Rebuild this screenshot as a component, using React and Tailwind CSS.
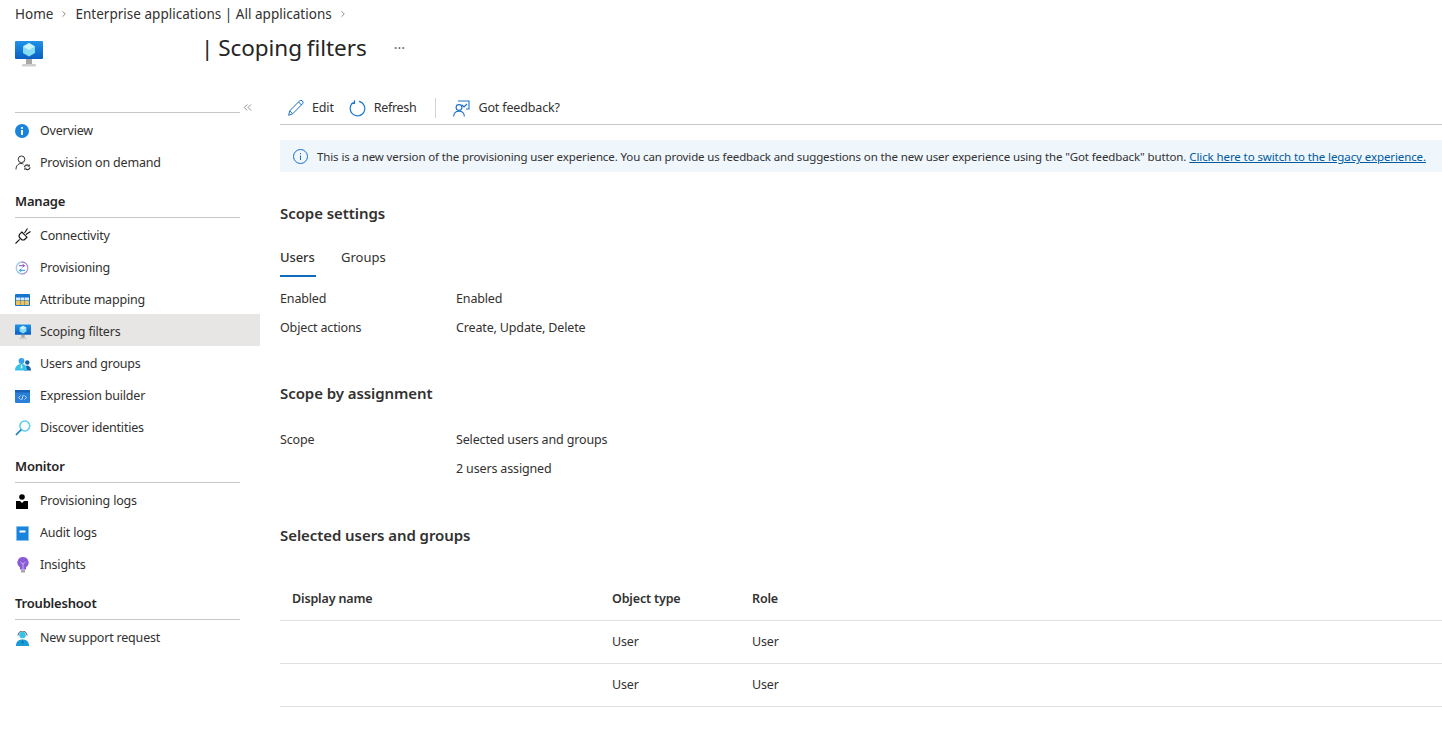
import { ChevronRight, ChevronsLeft } from 'lucide-react';

const font = { fontFamily: '"Noto Sans", sans-serif' };

function MonitorIcon({ id = 'scr', size = 16 }) {
    return (
        <svg width={size} height={size} viewBox="0 0 28 28">
            <defs>
                <linearGradient id={id} x1="0" y1="0" x2="0" y2="1">
                    <stop offset="0" stopColor="#1f93e8" />
                    <stop offset="1" stopColor="#0a5fc2" />
                </linearGradient>
            </defs>
            <rect x="0" y="1" width="28" height="18" rx="1" fill={`url(#${id})`} />
            <path d="M14 3l6 3.500v6.500l-6 3.500-6-3.500V6.500z" fill="#86dcf2" />
            <path d="M14 3l6 3.500-6 3.500-6-3.500z" fill="#c9f3fb" />
            <rect x="11" y="19" width="6" height="5" fill="#a8a8a8" />
            <rect x="7" y="24" width="14" height="2.500" rx="1" fill="#cfcfcf" />
        </svg>
    );
}

function OverviewIcon() {
    return (
        <svg width="14" height="14" viewBox="0 0 14 14">
            <circle cx="7" cy="7" r="7" fill="#1a84dc" />
            <rect x="6" y="6" width="2" height="5" fill="#fff" />
            <circle cx="7" cy="4" r="1.100" fill="#fff" />
        </svg>
    );
}

function ProvisionDemandIcon() {
    return (
        <svg width="16" height="16" viewBox="0 0 16 16" fill="none" stroke="#333" strokeWidth="1">
            <circle cx="6.500" cy="4.300" r="3.300" />
            <path d="M1 14.500c0-3.500 2-6 5-6 1 0 1.800.2 2.500.700" />
            <path d="M9.500 12.200a2.500 2.500 0 0 1 4.300-1.500M15 12.300a2.500 2.500 0 0 1-4.400 1.500" strokeWidth="1.200" />
            <path d="M14.500 9.500v1.800h-1.800M9.700 15v-1.800h1.800" strokeWidth="0.800" />
        </svg>
    );
}

function ConnectivityIcon() {
    return (
        <svg width="16" height="16" viewBox="0 0 16 16" fill="none" stroke="#111" strokeWidth="1.100">
            <path d="M6.800 4l5.200 5.200-1.800 1.800a3 3 0 0 1-4.200 0L5 10a3 3 0 0 1 0-4.200z" />
            <path d="M0.500 15.500l4.200-4.200M9.500 5l3-4.500M11 6.500l4.500-3" />
        </svg>
    );
}

function ProvisioningIcon() {
    return (
        <svg width="14" height="14" viewBox="0 0 14 14" fill="none" strokeWidth="1.400">
            <path d="M2.200 10A6 6 0 0 1 7 1" stroke="#a9c9e8" />
            <path d="M7 1a6 6 0 0 1 5.800 5.500" stroke="#a27fd0" />
            <path d="M12.800 6.500A6 6 0 0 1 7 13" stroke="#b49ad8" />
            <path d="M7 13a6 6 0 0 1-4.800-3" stroke="#8ec0e4" />
            <path d="M4 4.700h5.500M7.500 3.200l2 1.500-2 1.500" stroke="#7a55c0" strokeWidth="1" />
            <path d="M10 9.300H4.500M6.500 7.800l-2 1.500 2 1.500" stroke="#1d9ad6" strokeWidth="1" />
        </svg>
    );
}

function AttributeIcon() {
    return (
        <svg width="15" height="12" viewBox="0 0 15 12">
            <rect width="15" height="12" rx="1" fill="#1675d1" />
            <rect x="1" y="3.500" width="4" height="2.500" fill="#d7ecfb" />
            <rect x="5.500" y="3.500" width="4" height="2.500" fill="#d7ecfb" />
            <rect x="10" y="3.500" width="4" height="2.500" fill="#d7ecfb" />
            <rect x="1" y="6.500" width="4" height="4.500" fill="#f0c35a" />
            <rect x="5.500" y="6.500" width="4" height="4.500" fill="#f0c35a" />
            <rect x="10" y="6.500" width="4" height="4.500" fill="#f0c35a" />
        </svg>
    );
}

function UsersIcon() {
    return (
        <svg width="16" height="13" viewBox="0 0 16 13">
            <circle cx="12.300" cy="4.500" r="2.200" fill="#1b5fa8" />
            <path d="M9 12.500c0-2.800 1.200-5 3.300-5s3.700 2.200 3.700 5z" fill="#1b5fa8" />
            <circle cx="6.500" cy="3" r="2.900" fill="#35a3ea" />
            <path d="M0 12.500c0-4 2.500-6.500 6.500-6.500s5.500 2.500 5.500 6.500z" fill="#35c4e8" />
            <path d="M6.500 6l-1 3 1 2 1-2z" fill="#e8f7fc" />
        </svg>
    );
}

function ExpressionIcon() {
    return (
        <svg width="15" height="13" viewBox="0 0 15 13" fill="none">
            <rect width="15" height="13" rx="1" fill="#2a7fd8" />
            <rect width="15" height="2.500" fill="#1a62b3" />
            <path d="M5.500 5.500L3.500 7.500l2 2M9.500 5.500l2 2-2 2M8.300 5L6.700 10" stroke="#e8f4ff" strokeWidth="0.800" />
        </svg>
    );
}

function SearchIcon() {
    return (
        <svg width="16" height="16" viewBox="0 0 16 16" fill="none">
            <circle cx="9.800" cy="6" r="4.900" stroke="#55cdf0" strokeWidth="1.500" />
            <path d="M6.300 9.500L1 15" stroke="#1780c4" strokeWidth="1.800" />
        </svg>
    );
}

function LogsIcon() {
    return (
        <svg width="12" height="15" viewBox="0 0 12 15" className="ml-[1px]">
            <circle cx="6" cy="3" r="2.800" fill="#000" />
            <path d="M0 7h4l2 2 2-2h4v8H0z" fill="#000" />
        </svg>
    );
}

function AuditIcon() {
    return (
        <svg width="13" height="15" viewBox="0 0 13 15" className="ml-[1px]">
            <rect width="13" height="15" rx="1" fill="#7fc0ee" />
            <rect x="1" y="1" width="11" height="13" fill="#1a84dc" />
            <rect x="3.500" y="4.500" width="6" height="2" fill="#fff" />
        </svg>
    );
}

function InsightsIcon() {
    return (
        <svg width="12" height="16" viewBox="0 0 12 16" className="ml-[2px]">
            <path d="M6 0a5.700 5.700 0 0 1 3 10.500V12.500H3v-2A5.700 5.700 0 0 1 6 0z" fill="#8a5bd6" />
            <path d="M3.500 5l2.500 2 2.500-2M6 7v5" stroke="#d9c6f5" strokeWidth="0.800" fill="none" />
            <rect x="4" y="13" width="4" height="2.500" fill="#a8a8a8" />
        </svg>
    );
}

function SupportIcon() {
    return (
        <svg width="13" height="15" viewBox="0 0 13 15" className="ml-[1px]">
            <circle cx="6.500" cy="4" r="3.300" fill="#35c4e8" />
            <path d="M2 4.500a4.500 4.500 0 0 1 9 0" stroke="#444" strokeWidth="0.900" fill="none" />
            <path d="M0 15c0-4 2-6.500 6.500-6.500S13 11 13 15z" fill="#1a9bd8" />
            <path d="M6.500 8.500l-1 3 1 1.500 1-1.500z" fill="#0d6ea8" />
        </svg>
    );
}

function Section({ title, children }) {
    return (
        <div>
            <div className="h-10 pt-[15px] text-[13px] leading-[18px] font-semibold tracking-[-0.2px] text-[#252525]">
                <div className="pl-[15px]">{title}</div>
            </div>
            <div className="ml-[15px] mr-5 border-t border-[#c8c6c4]" />
            {children}
        </div>
    );
}

function NavItem({ icon, label, active }) {
    return (
        <div className={`h-8 flex items-center pl-[15px] pt-[4px] text-[12.5px] tracking-[-0.2px] text-[#323130] ${active ? 'bg-[#e8e6e4]' : ''}`}>
            <span className="w-[25px] flex items-center">{icon}</span>
            {label}
        </div>
    );
}

function Heading({ children }) {
    return <h2 className="text-[15px] leading-5 font-semibold text-[#323130] tracking-[-0.07px]">{children}</h2>;
}

function InfoRow({ label, value }) {
    return (
        <div className="h-[29px] flex items-center text-[12.5px] tracking-[-0.15px] text-[#323130]">
            <span className="w-[176px]">{label}</span>
            <span>{value}</span>
        </div>
    );
}

export default function App() {
    return (
        <div className="h-[749px] w-[1442px] overflow-hidden bg-white" style={font}>
            <div className="h-[28px] pl-[15px] flex items-center text-[13.5px] text-[#323130]">
                <span>Home</span>
                <ChevronRight size={10} className="mx-[6px] text-[#777]" />
                <span className="tracking-[0.02px]">Enterprise applications | All applications</span>
                <ChevronRight size={10} className="ml-[6px] text-[#777]" />
            </div>

            <div className="h-[64px] pl-[15px] flex items-start">
                <span className="mt-[12px]"><MonitorIcon id="scr-title" size={28} /></span>
                <h1 className="ml-[158px] mt-[2px] text-[22.5px] leading-9 tracking-[-0.05px] [word-spacing:-1px] text-[#252525]">| Scoping filters</h1>
                <span className="ml-[27px] mt-[9px] text-[14px] text-[#666]">···</span>
            </div>

            <div className="flex">
                <aside className="w-[260px] shrink-0">
                    <div className="h-[21px] relative">
                        <div className="absolute left-[15px] right-5 bottom-0 border-t border-[#c8c6c4]" />
                        <ChevronsLeft size={13} strokeWidth={1.5} className="absolute left-[241px] top-[9px] text-[#777]" />
                    </div>
                    <NavItem icon={<OverviewIcon />} label="Overview" />
                    <NavItem icon={<ProvisionDemandIcon />} label="Provision on demand" />
                    <Section title="Manage">
                        <NavItem icon={<ConnectivityIcon />} label="Connectivity" />
                        <NavItem icon={<ProvisioningIcon />} label="Provisioning" />
                        <NavItem icon={<AttributeIcon />} label="Attribute mapping" />
                        <NavItem icon={<MonitorIcon />} label="Scoping filters" active />
                        <NavItem icon={<UsersIcon />} label="Users and groups" />
                        <NavItem icon={<ExpressionIcon />} label="Expression builder" />
                        <NavItem icon={<SearchIcon />} label="Discover identities" />
                    </Section>
                    <Section title="Monitor">
                        <NavItem icon={<LogsIcon />} label="Provisioning logs" />
                        <NavItem icon={<AuditIcon />} label="Audit logs" />
                        <NavItem icon={<InsightsIcon />} label="Insights" />
                    </Section>
                    <Section title="Troubleshoot">
                        <NavItem icon={<SupportIcon />} label="New support request" />
                    </Section>
                </aside>

                <main className="flex-1 pl-5">
                    <div className="h-[33px] flex items-center border-b border-[#c8c6c4] text-[12.5px] tracking-[-0.15px] text-[#323130]">
                        <span className="ml-2 flex items-center">
                            <svg width="16" height="16" viewBox="0 0 16 16" fill="none" stroke="#1a6fc9" strokeWidth="1">
                                <path d="M0.700 15.300l1-4.500L11.500 1a1.800 1.800 0 0 1 3 2.800l-9.800 10zM1.700 10.800l3 3M10.500 2l3 3" />
                            </svg>
                            <span className="ml-2">Edit</span>
                        </span>
                        <span className="ml-[15px] flex items-center">
                            <svg width="17" height="17" viewBox="0 0 17 17" fill="none" stroke="#1a78d0" strokeWidth="1.200">
                                <path d="M4.700 2.300a7.300 7.300 0 1 0 5.300-.900" />
                                <path d="M5.500 0.300v3.200H2.300" />
                            </svg>
                            <span className="ml-[8px] tracking-[-0.3px]">Refresh</span>
                        </span>
                        <span className="ml-[19px] h-5 border-l border-[#d6d4d2]" />
                        <span className="ml-[17px] flex items-center">
                            <svg width="17" height="17" viewBox="0 0 17 17" fill="none" stroke="#1a6fc9" strokeWidth="1.100">
                                <circle cx="6" cy="7.500" r="2.900" />
                                <path d="M0.700 16.500c0-3 2-5.200 5.300-5.200s5.300 2.200 5.300 5.200M5 1h11v8h-3M9 5l2 2 3-3" />
                            </svg>
                            <span className="ml-2">Got feedback?</span>
                        </span>
                    </div>

                    <div className="mt-[15px] h-[32px] bg-[#eff6fc] pl-[13px] pt-[2px] flex items-center text-[11.5px] tracking-[-0.118px] text-[#323130] whitespace-nowrap">
                        <svg width="15" height="15" viewBox="0 0 15 15" fill="none" className="mr-[9px] shrink-0 -mt-[2px]">
                            <circle cx="7.500" cy="7.500" r="7" stroke="#1a6fc9" />
                            <rect x="7" y="6.500" width="1" height="4.500" fill="#1a6fc9" />
                            <rect x="7" y="4" width="1" height="1.200" fill="#1a6fc9" />
                        </svg>
                        <span>This is a new version of the provisioning user experience. You can provide us feedback and suggestions on the new user experience using the "Got feedback" button.</span>
                        <a href="#" className="ml-[3px] text-[#005a9e] underline tracking-[-0.1px]">Click here to switch to the legacy experience.</a>
                    </div>

                    <div className="mt-[31px]"><Heading>Scope settings</Heading></div>

                    <div className="mt-[20px] h-[34px] flex text-[13px]">
                        <div className="w-[36px] pt-[5px] border-b-2 border-[#0f6cbd] font-medium text-[#323130] tracking-[-0.1px]">Users</div>
                        <div className="ml-[25px] pt-[5px] text-[#323130]">Groups</div>
                    </div>

                    <div className="mt-[8px]">
                        <InfoRow label="Enabled" value="Enabled" />
                        <InfoRow label="Object actions" value="Create, Update, Delete" />
                    </div>

                    <div className="mt-[40px]"><Heading>Scope by assignment</Heading></div>

                    <div className="mt-[23px]">
                        <InfoRow label="Scope" value="Selected users and groups" />
                        <InfoRow label="" value="2 users assigned" />
                    </div>

                    <div className="mt-[41px]"><Heading>Selected users and groups</Heading></div>

                    <div className="mt-[32px] text-[12.5px] tracking-[-0.15px] text-[#323130]">
                        <div className="h-[44px] pt-[2px] flex items-center border-b border-[#e1dfdd] font-semibold">
                            <span className="w-[332px] pl-3">Display name</span>
                            <span className="w-[140px]">Object type</span>
                            <span>Role</span>
                        </div>
                        <div className="h-[43px] flex items-center border-b border-[#e1dfdd]">
                            <span className="w-[332px]" />
                            <span className="w-[140px]">User</span>
                            <span>User</span>
                        </div>
                        <div className="h-[43px] flex items-center border-b border-[#e1dfdd]">
                            <span className="w-[332px]" />
                            <span className="w-[140px]">User</span>
                            <span>User</span>
                        </div>
                    </div>
                </main>
            </div>
        </div>
    );
}
